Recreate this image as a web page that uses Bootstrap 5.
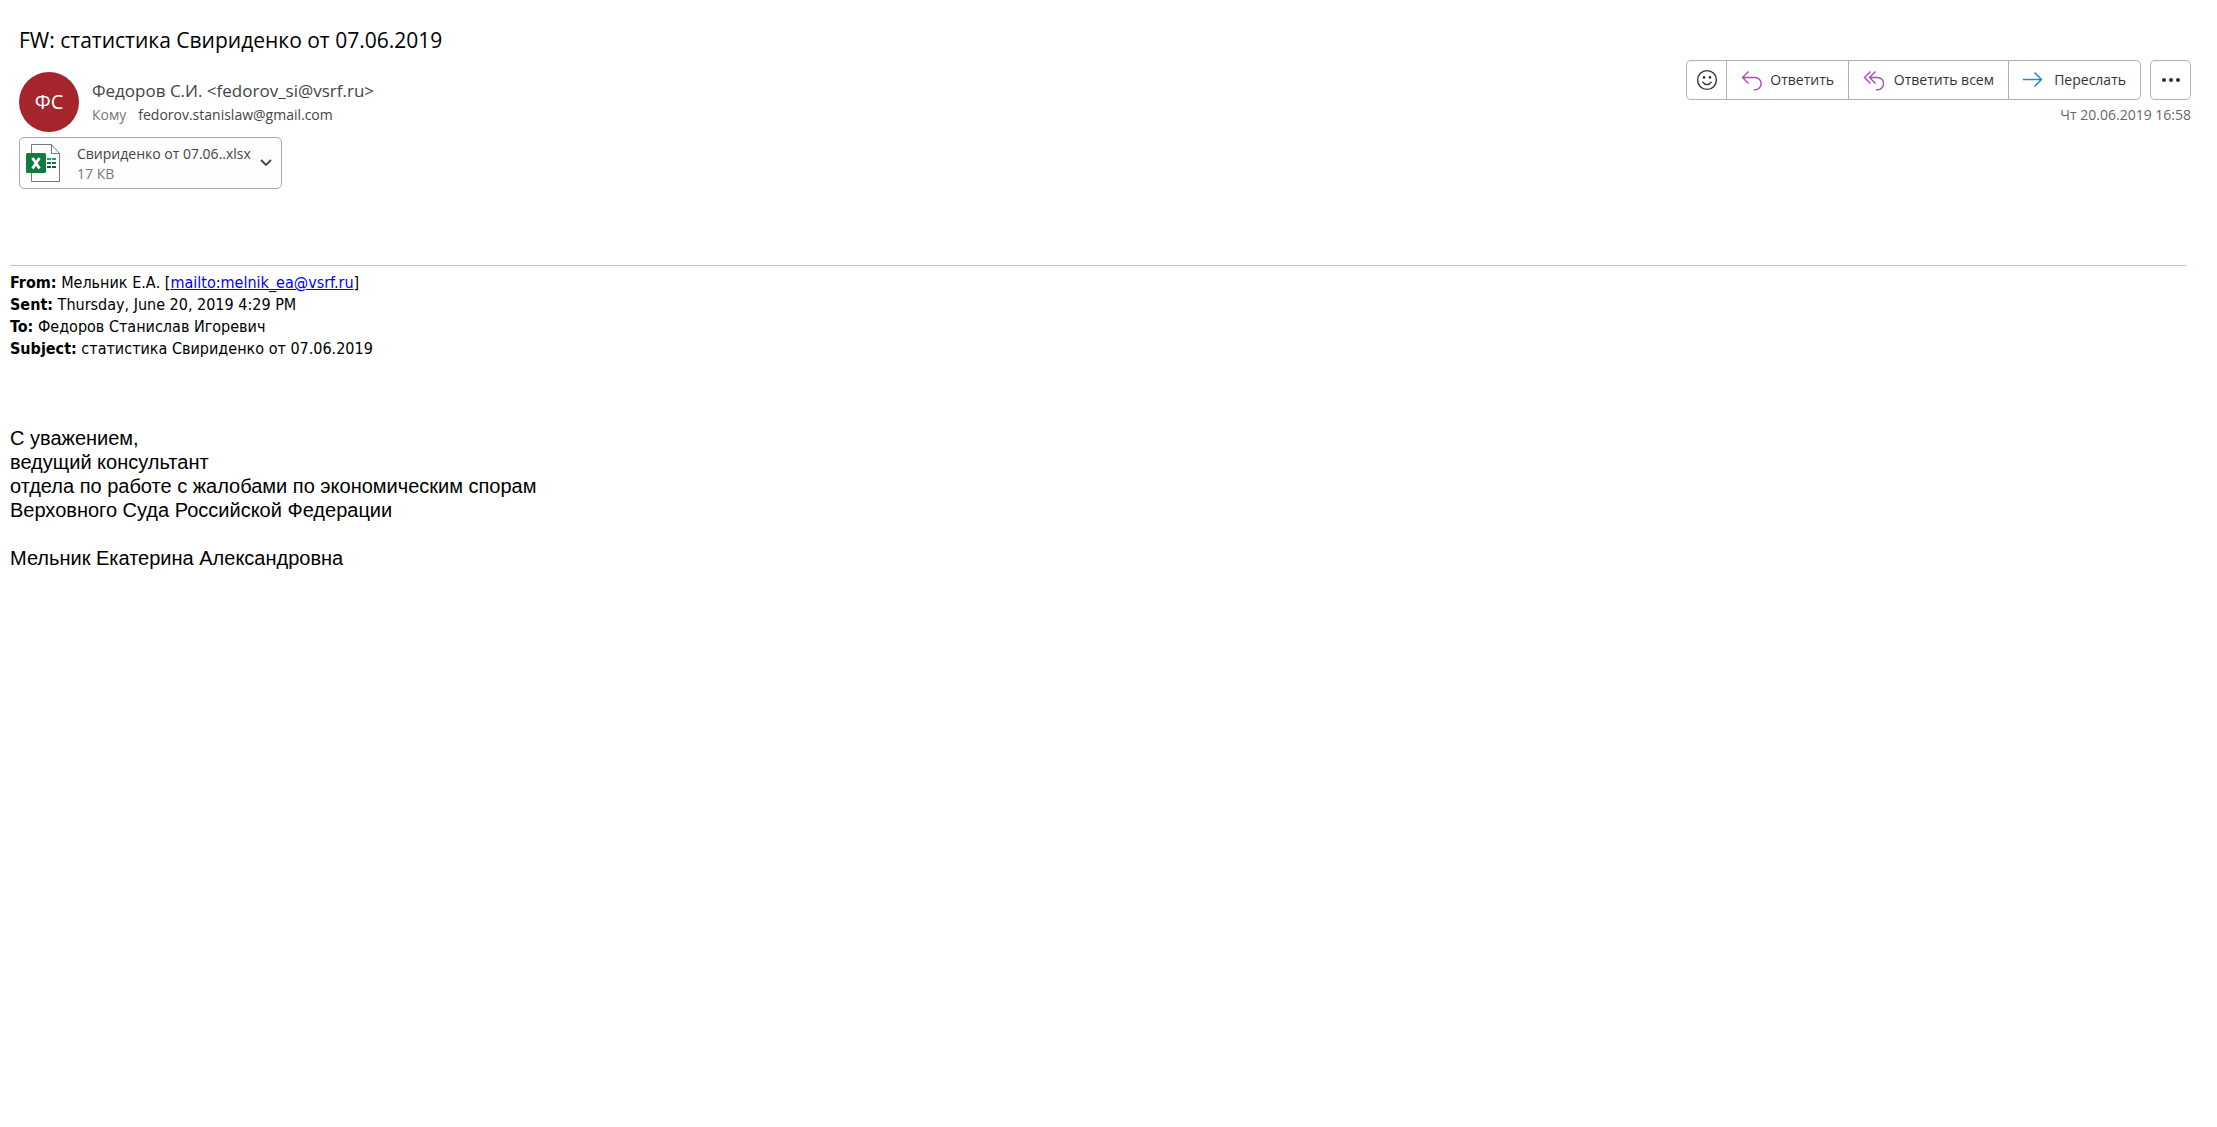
<!DOCTYPE html>
<html lang="ru">
<head>
<meta charset="utf-8">
<meta name="viewport" content="width=device-width, initial-scale=1">
<title>FW: статистика Свириденко от 07.06.2019</title>
<link href="https://cdn.jsdelivr.net/npm/bootstrap@5.3.0/dist/css/bootstrap.min.css" rel="stylesheet">
<style>
  body { background: #fff; color: #000; font-family: "Open Sans", "Noto Sans", sans-serif; font-size: 14px; line-height: 20px; }
  .mail-head { padding: 24px 26px 0 19px; }
  .mail-subject { font-size: 21px; line-height: 32px; font-weight: 400; }
  .avatar { width: 60px; height: 60px; background: #a4262c; color: #fff; font-size: 20px; }
  .sender-info { margin: 7px 0 0 13px; }
  .sender { font-size: 17px; line-height: 24px; color: #444; }
  .recipient { font-size: 14px; line-height: 24px; color: #444; }
  .hint { color: #777; }
  .outline-btn { --bs-btn-color: #333; --bs-btn-border-color: #b3b0ad; --bs-btn-border-radius: 5px; --bs-btn-bg: #fff; --bs-btn-hover-bg: #f3f2f1; --bs-btn-hover-color: #333; --bs-btn-hover-border-color: #b3b0ad; --bs-btn-padding-y: 0; --bs-btn-padding-x: 14px; --bs-btn-font-size: 14px; --bs-btn-line-height: 20px; height: 40px; }
  .square-btn { width: 41px; --bs-btn-padding-x: 0; }
  .reply-btn { width: 123px; }
  .reply-all-btn { width: 161px; }
  .forward-btn { width: 133px; }
  .mail-actions { gap: 9px; }
  .sent-date { color: #666; line-height: 24px; margin-top: 3px; }
  .attachment { width: 263px; height: 52px; margin-top: 5px; padding: 0 9px 0 6px; background: #fdfdfd; border: 1px solid #aaa; border-radius: 5px; color: #444; font-size: 14px; text-align: left; }
  .attachment-text { margin-left: 15px; padding-top: 1px; }
  .mail-body { padding: 76px 31px 0 10px; }
  .mail-body hr { margin: 0 0 6px; border-color: #b5c4df; opacity: 1; }
  .quoted { font-family: "DejaVu Sans Condensed", "Noto Sans", sans-serif; font-size: 16px; line-height: 22px; }
  .quoted a { color: #00f; }
  .signature { margin-top: 66px; font-family: "Liberation Sans", Arial, sans-serif; font-size: 20px; line-height: 24px; }
</style>
<script src="https://cdn.jsdelivr.net/npm/bootstrap@5.3.0/dist/js/bootstrap.bundle.min.js"></script>
</head>
<body>
<header class="mail-head">
  <h1 class="mail-subject mb-0">FW: статистика Свириденко от 07.06.2019</h1>
  <div class="d-flex justify-content-between align-items-start">
    <div class="d-flex mt-3">
      <div class="avatar rounded-circle d-flex align-items-center justify-content-center flex-shrink-0">ФС</div>
      <div class="sender-info">
        <div class="sender">Федоров С.И. &lt;fedorov_si@vsrf.ru&gt;</div>
        <div class="recipient d-flex"><span class="hint me-2 pe-1">Кому</span><span>fedorov.stanislaw@gmail.com</span></div>
      </div>
    </div>
    <div class="pt-1 text-end">
      <div class="mail-actions d-flex">
        <div class="btn-group" role="group" aria-label="Действия">
          <button type="button" class="btn outline-btn square-btn" aria-label="Реакция">
            <svg class="d-block mx-auto" width="22" height="22" viewBox="0 0 22 22" fill="none" stroke="#333" stroke-width="1.4" stroke-linecap="round"><circle cx="11" cy="11" r="9.4"/><path d="M6.800 13.200a4.900 4.900 0 0 0 8.400 0"/><g fill="#333" stroke="none"><circle cx="8" cy="8.400" r="1.300"/><circle cx="14" cy="8.400" r="1.300"/></g></svg>
          </button>
          <button type="button" class="btn outline-btn reply-btn d-flex align-items-center justify-content-between">
            <svg width="21" height="21" viewBox="0 0 21 21" fill="none" stroke="#b146c2" stroke-width="1.4"><path d="M7.500 1.500 1.500 7.500l6 6M1.500 7.500H14a5.800 5.800 0 0 1 0 12.200H13"/></svg>
            <span>Ответить</span>
          </button>
          <button type="button" class="btn outline-btn reply-all-btn d-flex align-items-center justify-content-between">
            <svg width="21" height="21" viewBox="0 0 21 21" fill="none" stroke="#b146c2" stroke-width="1.4"><path d="M7.500 1.500l-6 6 6 6M12.500 1.500l-6 6 6 6M6.500 7.500H14.500a5.800 5.800 0 0 1 0 12.200H13"/></svg>
            <span>Ответить всем</span>
          </button>
          <button type="button" class="btn outline-btn forward-btn d-flex align-items-center justify-content-between">
            <svg width="20" height="20" viewBox="0 0 20 20" fill="none" stroke="#1e8bcd" stroke-width="1.500"><path d="M0 9.500H18.500M11.500 2.500l7 7-7 7"/></svg>
            <span>Переслать</span>
          </button>
        </div>
        <button type="button" class="btn outline-btn square-btn" aria-label="Другие действия">
          <svg class="d-block mx-auto" width="20" height="6" viewBox="0 0 20 6" fill="#333"><circle cx="3" cy="3" r="2"/><circle cx="10" cy="3" r="2"/><circle cx="17" cy="3" r="2"/></svg>
        </button>
      </div>
      <div class="sent-date">Чт 20.06.2019 16:58</div>
    </div>
  </div>
  <button type="button" class="attachment d-flex align-items-center">
    <svg class="flex-shrink-0" width="36" height="40" viewBox="0 0 36 40"><path d="M5.500 1.500h20l8 9V38.500H5.500z" fill="#fff" stroke="#777"/><path d="M25.500 1.500v9h8" fill="none" stroke="#777"/><path d="M21 15h4v2h-4zM26 15h4v2h-4z" fill="#21a366"/><path d="M21 19h4v2h-4zM26 19h4v2h-4z" fill="#107c41"/><path d="M21 23h4v2h-4zM26 23h4v2h-4z" fill="#185c37"/><rect y="10" width="20" height="20" rx="1.500" fill="#107c41"/><path d="M6.500 15l7 10.500M13.500 15 6.500 25.500" stroke="#fff" stroke-width="2.800"/></svg>
    <span class="attachment-text flex-grow-1"><span class="d-block">Свириденко от 07.06..xlsx</span><span class="d-block hint">17 КВ</span></span>
    <svg width="12" height="8" viewBox="0 0 12 8" fill="none" stroke="#444" stroke-width="1.800"><path d="M1 1l5 5 5-5"/></svg>
  </button>
</header>
<main class="mail-body">
  <hr>
  <div class="quoted">
    <div><b>From:</b> Мельник Е.А. [<a href="mailto:melnik_ea@vsrf.ru">mailto:melnik_ea@vsrf.ru</a>]</div>
    <div><b>Sent:</b> Thursday, June 20, 2019 4:29 PM</div>
    <div><b>To:</b> Федоров Станислав Игоревич</div>
    <div><b>Subject:</b> статистика Свириденко от 07.06.2019</div>
  </div>
  <div class="signature">
    <div>С уважением,</div>
    <div>ведущий консультант</div>
    <div>отдела по работе с жалобами по экономическим спорам</div>
    <div>Верховного Суда Российской Федерации</div>
    <br>
    <div>Мельник Екатерина Александровна</div>
  </div>
</main>
</body>
</html>
